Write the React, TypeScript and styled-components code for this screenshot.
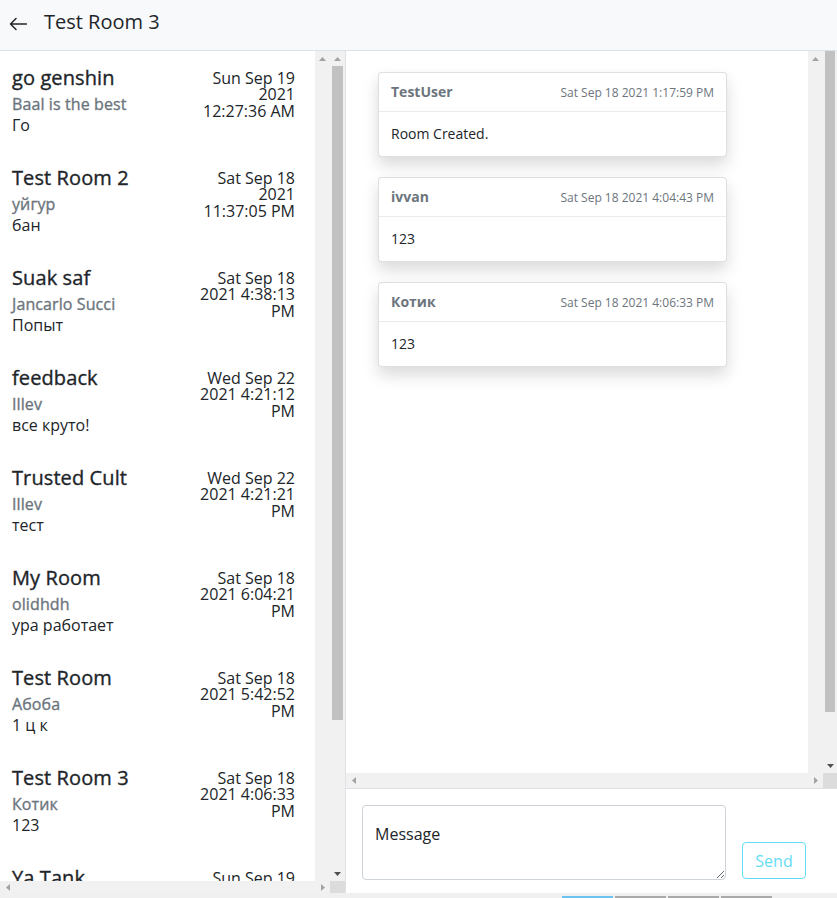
import React from "react";
import styled, { createGlobalStyle } from "styled-components";

const GlobalStyle = createGlobalStyle`
  html, body { margin: 0; padding: 0; }
  body {
    font-family: "Open Sans", "Noto Sans", sans-serif;
    color: #212529;
    background: #fff;
    overflow: hidden;
  }
  * { box-sizing: border-box; }
`;

const Page = styled.div`
  display: flex;
  flex-direction: column;
  height: 100vh;
`;

const Header = styled.header`
  height: 51px;
  flex-shrink: 0;
  display: flex;
  align-items: center;
  gap: 17px;
  padding: 0 0 0 9px;
  background: #f8f9fa;
  border-bottom: 1px solid #dee2e6;
`;

const BackButton = styled.button`
  border: 0;
  background: transparent;
  padding: 0;
  width: 18px;
  height: 14px;
  display: flex;
  align-items: center;
  cursor: pointer;
  margin-top: -3px;
`;

const Title = styled.h1`
  margin: 0;
  font-size: 20px;
  font-weight: 400;
  line-height: 24px;
  margin-top: -6px;
`;

const Main = styled.div`
  flex: 1;
  display: flex;
  min-height: 0;
`;

/* ---------- scrollbars (drawn) ---------- */

const Frame = styled.div<{ $cols: string; $rows: string }>`
  flex: 1;
  display: grid;
  grid-template-columns: ${(p) => p.$cols};
  grid-template-rows: ${(p) => p.$rows};
  min-height: 0;
  min-width: 0;
`;

const VBar = styled.div`
  display: flex;
  flex-direction: column;
  background: #f1f1f1;
  min-height: 0;
  overflow: hidden;
`;

const HBar = styled.div`
  grid-column: 1 / 3;
  display: flex;
  background: #f1f1f1;
  min-width: 0;
`;

const ArrowBox = styled.div<{ $w: number; $h: number }>`
  width: ${(p) => p.$w}px;
  height: ${(p) => p.$h}px;
  flex-shrink: 0;
  display: flex;
  align-items: center;
  justify-content: center;
`;

const Track = styled.div`
  flex: 1;
  min-height: 0;
  min-width: 0;
`;

const Thumb = styled.div<{ $len: number }>`
  height: ${(p) => p.$len}px;
  margin: 0 2px 0 2px;
  background: #c1c1c1;
  flex-shrink: 0;
`;

const Corner = styled.div`
  background: #dcdcdc;
`;

type Dir = "up" | "down" | "left" | "right";

const triangle: Record<Dir, string> = {
  up: "0,4 3.5,0 7,4",
  down: "0,0 7,0 3.5,4",
  left: "4,0 4,7 0,3.5",
  right: "0,0 0,7 4,3.5",
};

function Arrow({ dir, active, w = 15, h = 15 }: { dir: Dir; active?: boolean; w?: number; h?: number }) {
  const vert = dir === "up" || dir === "down";
  return (
    <ArrowBox $w={w} $h={h}>
      <svg width={vert ? 7 : 4} height={vert ? 4 : 7} viewBox={vert ? "0 0 7 4" : "0 0 4 7"}>
        <polygon points={triangle[dir]} fill={active ? "#505050" : "#a3a3a3"} />
      </svg>
    </ArrowBox>
  );
}

/* ---------- sidebar ---------- */

const Sidebar = styled.aside`
  width: 346px;
  flex-shrink: 0;
  display: flex;
  border-right: 1px solid #dee2e6;
`;

const RoomList = styled.div`
  overflow: hidden;
  min-height: 0;
`;

const RoomItem = styled.div`
  display: flex;
  justify-content: space-between;
  height: 100px;
  padding: 13px 20px 0 12px;
`;

const RoomText = styled.div`
  display: flex;
  flex-direction: column;
  min-width: 0;
`;

const RoomName = styled.div`
  font-size: 20px;
  line-height: 28px;
  font-weight: 400;
  -webkit-text-stroke: 0.35px #212529;
  letter-spacing: 0.1px;
  white-space: nowrap;
`;

const RoomAuthor = styled.div`
  font-size: 16px;
  line-height: 24px;
  font-weight: 400;
  -webkit-text-stroke: 0.35px #6c757d;
  letter-spacing: 0.1px;
  color: #6c757d;
  white-space: nowrap;
`;

const RoomLast = styled.div`
  font-size: 16px;
  line-height: 19px;
  white-space: nowrap;
`;

const RoomDate = styled.div`
  width: 100px;
  flex-shrink: 0;
  text-align: right;
  font-size: 16px;
  line-height: 16.3px;
  margin-top: 6px;
  color: #212529;
`;

/* ---------- chat ---------- */

const ChatPanel = styled.section`
  flex: 1;
  min-width: 0;
  display: flex;
  flex-direction: column;
`;

const MessageList = styled.div`
  overflow: hidden;
  min-height: 0;
  padding: 21px 32px;
  display: flex;
  flex-direction: column;
  align-items: flex-start;
  gap: 20px;
`;

const Card = styled.div`
  width: 349px;
  border: 1px solid rgba(0, 0, 0, 0.125);
  border-radius: 4px;
  background: #fff;
  box-shadow: 0 8px 16px rgba(0, 0, 0, 0.15);
`;

const CardHeader = styled.div`
  display: flex;
  justify-content: space-between;
  align-items: baseline;
  padding: 8px 12px;
  border-bottom: 1px solid rgba(0, 0, 0, 0.08);
  font-size: 14px;
  line-height: 21px;
  color: #6c757d;
`;

const Author = styled.span`
  font-weight: 700;
`;

const Stamp = styled.span`
  font-size: 12px;
`;

const CardBody = styled.div`
  padding: 11px 12px 12px;
  font-size: 14px;
  line-height: 21px;
`;

const Composer = styled.div`
  flex-shrink: 0;
  display: flex;
  align-items: flex-end;
  gap: 16px;
  padding: 16px 16px 13px;
  border-top: 1px solid #dee2e6;
`;

const MessageInput = styled.textarea`
  width: 364px;
  height: 75px;
  padding: 16px 12px;
  border: 1px solid #ced4da;
  border-radius: 4px;
  font-family: inherit;
  font-size: 16px;
  line-height: 24px;
  color: #212529;
  resize: vertical;
  outline: none;
  &::placeholder { color: #212529; opacity: 1; }
`;

const SendButton = styled.button`
  width: 64px;
  height: 37px;
  margin-bottom: 1px;
  border: 1px solid #0dcaf0;
  border-radius: 4px;
  background: transparent;
  color: #0dcaf0;
  font-family: inherit;
  font-size: 16px;
  line-height: 24px;
  opacity: 0.65;
  padding: 0;
`;

const Footer = styled.div`
  height: 5px;
  flex-shrink: 0;
  background: #f0f0f0;
  display: flex;
  gap: 2px;
  padding-left: 562px;
  align-items: flex-end;
`;

const Dot = styled.span<{ $active?: boolean }>`
  width: 51px;
  height: 2px;
  background: ${(p) => (p.$active ? "#6cc3ef" : "#aaaaaa")};
`;

const rooms = [
  { name: "go genshin", author: "Baal is the best", last: "Го", date: "Sun Sep 19 2021 12:27:36 AM" },
  { name: "Test Room 2", author: "уйгур", last: "бан", date: "Sat Sep 18 2021 11:37:05 PM" },
  { name: "Suak saf", author: "Jancarlo Succi", last: "Попыт", date: "Sat Sep 18 2021 4:38:13 PM" },
  { name: "feedback", author: "Illev", last: "все круто!", date: "Wed Sep 22 2021 4:21:12 PM" },
  { name: "Trusted Cult", author: "Illev", last: "тест", date: "Wed Sep 22 2021 4:21:21 PM" },
  { name: "My Room", author: "olidhdh", last: "ура работает", date: "Sat Sep 18 2021 6:04:21 PM" },
  { name: "Test Room", author: "Абоба", last: "1 ц к", date: "Sat Sep 18 2021 5:42:52 PM" },
  { name: "Test Room 3", author: "Котик", last: "123", date: "Sat Sep 18 2021 4:06:33 PM" },
  { name: "Ya Tank", author: "Ya Tank", last: "123", date: "Sun Sep 19 2021 1:02:11 AM" },
];

const messages = [
  { author: "TestUser", date: "Sat Sep 18 2021 1:17:59 PM", text: "Room Created." },
  { author: "ivvan", date: "Sat Sep 18 2021 4:04:43 PM", text: "123" },
  { author: "Котик", date: "Sat Sep 18 2021 4:06:33 PM", text: "123" },
];

export default function App() {
  return (
    <>
      <GlobalStyle />
      <Page>
        <Header>
          <BackButton aria-label="Back">
            <svg width="18" height="14" viewBox="0 0 18 14" fill="none">
              <path d="M17.5 7H1.5M7 1.5L1.5 7L7 12.5" stroke="#212529" strokeWidth="1.5" strokeLinecap="round" strokeLinejoin="round" />
            </svg>
          </BackButton>
          <Title>Test Room 3</Title>
        </Header>
        <Main>
          <Sidebar>
            <Frame $cols="315px 15px 15px" $rows="1fr 12px">
              <RoomList>
                {rooms.map((r) => (
                  <RoomItem key={r.name}>
                    <RoomText>
                      <RoomName>{r.name}</RoomName>
                      <RoomAuthor>{r.author}</RoomAuthor>
                      <RoomLast>{r.last}</RoomLast>
                    </RoomText>
                    <RoomDate>{r.date}</RoomDate>
                  </RoomItem>
                ))}
              </RoomList>
              <VBar>
                <Arrow dir="up" />
                <Track />
              </VBar>
              <VBar>
                <Arrow dir="up" />
                <Thumb $len={654} />
                <Track />
                <Arrow dir="down" active h={14} />
              </VBar>
              <HBar>
                <Arrow dir="left" h={12} />
                <Track />
                <Arrow dir="right" h={12} />
              </HBar>
              <Corner />
            </Frame>
          </Sidebar>
          <ChatPanel>
            <Frame $cols="1fr 15px 14px" $rows="1fr 15px">
              <MessageList>
                {messages.map((m) => (
                  <Card key={m.date}>
                    <CardHeader>
                      <Author>{m.author}</Author>
                      <Stamp>{m.date}</Stamp>
                    </CardHeader>
                    <CardBody>{m.text}</CardBody>
                  </Card>
                ))}
              </MessageList>
              <VBar>
                <Arrow dir="up" />
                <Track />
              </VBar>
              <VBar>
                <Thumb $len={661} />
                <Track />
                <Arrow dir="down" active w={14} />
              </VBar>
              <HBar>
                <Arrow dir="left" />
                <Track />
                <Arrow dir="right" />
              </HBar>
              <Corner />
            </Frame>
            <Composer>
              <MessageInput placeholder="Message" />
              <SendButton disabled>Send</SendButton>
            </Composer>
          </ChatPanel>
        </Main>
        <Footer>
          <Dot $active />
          <Dot />
          <Dot />
          <Dot />
        </Footer>
      </Page>
    </>
  );
}
